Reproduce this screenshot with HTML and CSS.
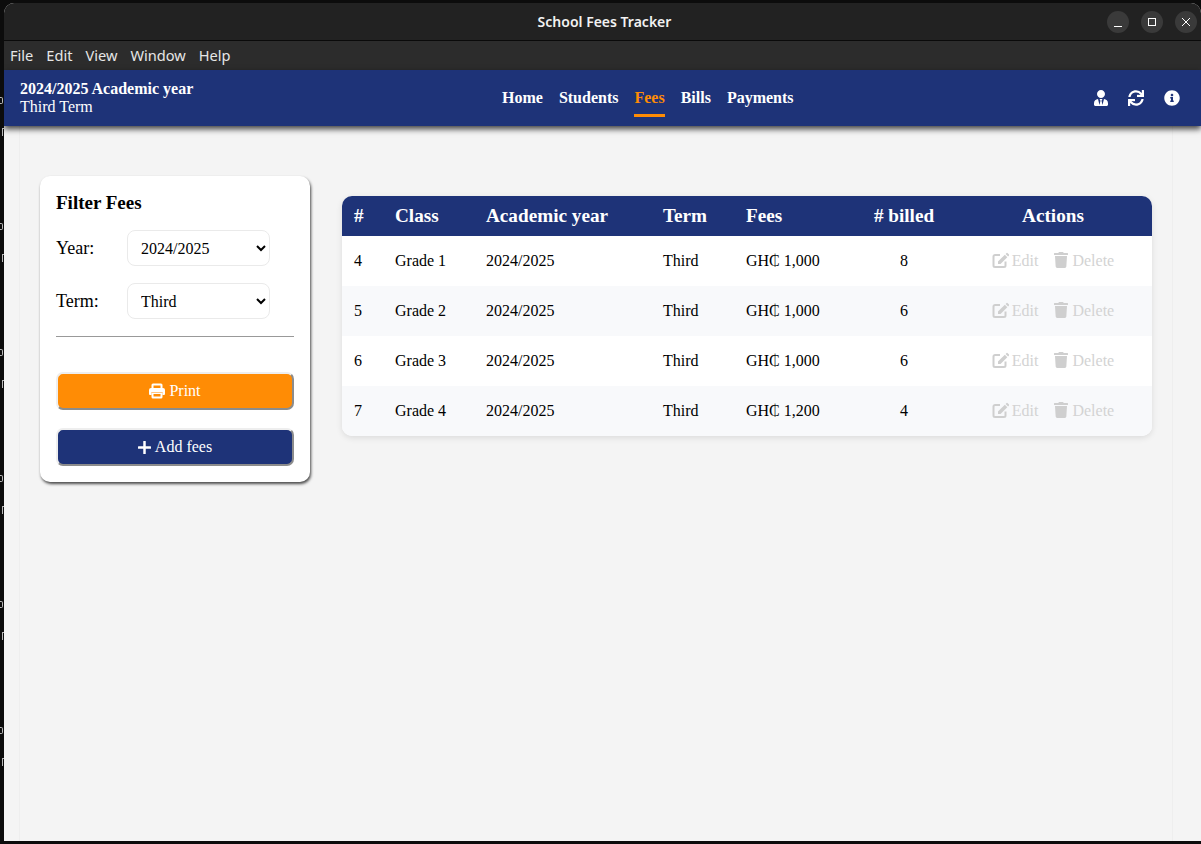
FILE: index.html

```html
<!DOCTYPE html>
<html lang="en">
<head>
    <meta charset="UTF-8">
    <title>School Fees Tracker</title>
    <link rel="stylesheet" href="styles.css">
</head>
<body>
<svg class="defs" width="0" height="0">
    <symbol id="i-print" viewBox="0 0 16 16"><path d="M4 0.5h8a1.5 1.5 0 0 1 1.5 1.5v3.5h-2V2.5h-7v3h-2V2A1.5 1.5 0 0 1 4 0.5z"/><path d="M2 5h12a2 2 0 0 1 2 2v4a1 1 0 0 1-1 1h-1.500V9h-11v3H1a1 1 0 0 1-1-1V7a2 2 0 0 1 2-2z"/><path fill-rule="evenodd" d="M2.500 9.500h11V14a1.500 1.500 0 0 1-1.500 1.500H4A1.500 1.500 0 0 1 2.500 14zM4.500 11v2.500h7V11z"/></symbol>
    <symbol id="i-plus" viewBox="0 0 13 13"><rect x="5.250" y="0" width="2.500" height="13" rx="0.500"/><rect x="0" y="5.250" width="13" height="2.500" rx="0.500"/></symbol>
    <symbol id="i-edit" viewBox="0 0 17 16"><path d="M8 3H3a1.500 1.500 0 0 0-1.500 1.500v9A1.500 1.500 0 0 0 3 15h9a1.500 1.500 0 0 0 1.500-1.500V9.500" fill="none" stroke-width="2" stroke="#cfcfcf"/><path d="M6 9.500L12.800 2.700l2.500 2.500L8.500 12H6z"/><path d="M13.600 1.900l.7-.7a1 1 0 0 1 1.400 0l1.100 1.100a1 1 0 0 1 0 1.400l-.7.700z"/></symbol>
    <symbol id="i-trash" viewBox="0 0 448 512"><path d="M432 32H312l-9.4-18.7A24 24 0 0 0 281.1 0H166.8a23.72 23.72 0 0 0-21.4 13.3L136 32H16A16 16 0 0 0 0 48v32a16 16 0 0 0 16 16h416a16 16 0 0 0 16-16V48a16 16 0 0 0-16-16zM53.2 467a48 48 0 0 0 47.9 45h245.8a48 48 0 0 0 47.9-45L416 128H32z"/></symbol>
    <symbol id="i-user" viewBox="0 0 448 512"><path d="M224 256c70.7 0 128-57.3 128-128S294.7 0 224 0 96 57.3 96 128s57.3 128 128 128zm95.8 32.6L272 480l-32-136 32-56h-96l32 56-32 136-47.8-191.4C56.9 292 0 350.3 0 422.4V464c0 26.5 21.5 48 48 48h352c26.5 0 48-21.5 48-48v-41.6c0-72.1-56.9-130.4-128.2-133.8z"/></symbol>
    <symbol id="i-sync" viewBox="0 0 512 512"><path d="M440.65 12.57l4 82.77A247.16 247.16 0 0 0 255.83 8C134.73 8 33.91 94.92 12.29 209.82A12 12 0 0 0 24.09 224h49.05a12 12 0 0 0 11.67-9.26 175.91 175.91 0 0 1 317-56.94l-101.46-4.86a12 12 0 0 0-12.57 12v47.41a12 12 0 0 0 12 12H500a12 12 0 0 0 12-12V12a12 12 0 0 0-12-12h-47.37a12 12 0 0 0-11.98 12.57zM255.83 432a175.61 175.61 0 0 1-146-77.8l101.8 4.87a12 12 0 0 0 12.57-12v-47.4a12 12 0 0 0-12-12H12a12 12 0 0 0-12 12V500a12 12 0 0 0 12 12h47.35a12 12 0 0 0 12-12.6l-4.15-82.57A247.17 247.17 0 0 0 255.83 504c121.11 0 221.93-86.92 243.55-201.82a12 12 0 0 0-11.8-14.18h-49.05a12 12 0 0 0-11.67 9.26A175.86 175.86 0 0 1 255.83 432z"/></symbol>
    <symbol id="i-info" viewBox="0 0 512 512"><path d="M256 8C119.043 8 8 119.083 8 256c0 136.997 111.043 248 248 248s248-111.003 248-248C504 119.083 392.957 8 256 8zm0 110c23.196 0 42 18.804 42 42s-18.804 42-42 42-42-18.804-42-42 18.804-42 42-42zm56 254c0 6.627-5.373 12-12 12h-88c-6.627 0-12-5.373-12-12v-24c0-6.627 5.373-12 12-12h12v-64h-12c-6.627 0-12-5.373-12-12v-24c0-6.627 5.373-12 12-12h64c6.627 0 12 5.373 12 12v100h12c6.627 0 12 5.373 12 12v24z"/></symbol>
</svg>

<!-- bits of the desktop behind the window -->
<div class="desktop-bits">
    <div class="bits-row"><i class="bit-o"></i><i class="bit-r"></i></div>
    <div class="bits-row"><i class="bit-o"></i><i class="bit-r"></i></div>
    <div class="bits-row"><i class="bit-o"></i><i class="bit-r"></i></div>
    <div class="bits-row"><i class="bit-o"></i><i class="bit-r"></i></div>
    <div class="bits-row"><i class="bit-o"></i><i class="bit-r"></i></div>
    <div class="bits-row"><i class="bit-o"></i><i class="bit-r"></i></div>
</div>

<div class="window">
    <div class="titlebar">
        <span class="title">School Fees Tracker</span>
        <div class="win-btns">
            <span class="win-btn"><svg width="10" height="10" viewBox="0 0 10 10"><path d="M1 9.500h8" stroke="#fff" stroke-width="1"/></svg></span>
            <span class="win-btn"><svg width="10" height="10" viewBox="0 0 10 10"><rect x="1.500" y="1.500" width="7" height="7" fill="none" stroke="#fff" stroke-width="1"/></svg></span>
            <span class="win-btn"><svg width="10" height="10" viewBox="0 0 10 10"><path d="M1 1l8 8M9 1l-8 8" stroke="#fff" stroke-width="1"/></svg></span>
        </div>
    </div>
    <div class="menubar">
        <span>File</span><span>Edit</span><span>View</span><span>Window</span><span>Help</span>
    </div>
    <header class="header">
        <div class="session">
            <strong>2024/2025 Academic year</strong>
            <span>Third Term</span>
        </div>
        <nav class="nav">
            <a>Home</a>
            <a>Students</a>
            <a class="active">Fees</a>
            <a>Bills</a>
            <a>Payments</a>
        </nav>
        <div class="tools">
            <svg class="tool tool-user"><use href="#i-user"/></svg>
            <svg class="tool"><use href="#i-sync"/></svg>
            <svg class="tool"><use href="#i-info"/></svg>
        </div>
    </header>
    <main class="page">
        <div class="panel">
            <aside class="filter">
                <h2>Filter Fees</h2>
                <div class="field">
                    <label>Year:</label>
                    <select><option>2024/2025</option></select>
                </div>
                <div class="field">
                    <label>Term:</label>
                    <select><option>Third</option></select>
                </div>
                <hr>
                <button class="btn btn-print"><svg class="btn-icon"><use href="#i-print"/></svg> Print</button>
                <button class="btn btn-add"><svg class="btn-plus"><use href="#i-plus"/></svg> Add fees</button>
            </aside>
            <section class="fees">
                <table>
                    <colgroup>
                        <col class="c-id"><col class="c-class"><col class="c-year"><col class="c-term"><col class="c-fees"><col class="c-billed"><col class="c-actions">
                    </colgroup>
                    <thead>
                        <tr><th>#</th><th>Class</th><th>Academic year</th><th>Term</th><th>Fees</th><th class="mid"># billed</th><th class="mid">Actions</th></tr>
                    </thead>
                    <tbody>
                        <tr>
                            <td>4</td><td>Grade 1</td><td>2024/2025</td><td>Third</td><td>GH₵ 1,000</td><td class="mid">8</td>
                            <td class="mid"><span class="act"><svg class="a-edit"><use href="#i-edit"/></svg> Edit</span><span class="act"><svg class="a-trash"><use href="#i-trash"/></svg> Delete</span></td>
                        </tr>
                        <tr>
                            <td>5</td><td>Grade 2</td><td>2024/2025</td><td>Third</td><td>GH₵ 1,000</td><td class="mid">6</td>
                            <td class="mid"><span class="act"><svg class="a-edit"><use href="#i-edit"/></svg> Edit</span><span class="act"><svg class="a-trash"><use href="#i-trash"/></svg> Delete</span></td>
                        </tr>
                        <tr>
                            <td>6</td><td>Grade 3</td><td>2024/2025</td><td>Third</td><td>GH₵ 1,000</td><td class="mid">6</td>
                            <td class="mid"><span class="act"><svg class="a-edit"><use href="#i-edit"/></svg> Edit</span><span class="act"><svg class="a-trash"><use href="#i-trash"/></svg> Delete</span></td>
                        </tr>
                        <tr>
                            <td>7</td><td>Grade 4</td><td>2024/2025</td><td>Third</td><td>GH₵ 1,200</td><td class="mid">4</td>
                            <td class="mid"><span class="act"><svg class="a-edit"><use href="#i-edit"/></svg> Edit</span><span class="act"><svg class="a-trash"><use href="#i-trash"/></svg> Delete</span></td>
                        </tr>
                    </tbody>
                </table>
            </section>
        </div>
    </main>
</div>
</body>
</html>
```

FILE: styles.css

```css
* {
    box-sizing: border-box;
}

html, body {
    margin: 0;
    height: 100%;
}

body {
    background: #0c0c0c;
    padding: 3px 0 3px 4px;
    font-family: "Liberation Serif", serif;
    overflow: hidden;
}

.defs {
    position: absolute;
}

.desktop-bits {
    position: absolute;
    left: 0;
    top: 97px;
    width: 4px;
    overflow: hidden;
}

.bits-row {
    height: 126px;
}

.bit-o {
    display: block;
    width: 3px;
    height: 7px;
    border: 1px solid #b8b8b8;
    border-left: 0;
    border-radius: 0 2px 2px 0;
}

.bit-r {
    display: block;
    width: 2px;
    height: 8px;
    margin: 24px 0 0 2px;
    border-left: 1px solid #b8b8b8;
    border-top: 1px solid #b8b8b8;
}

.window {
    height: 100%;
    display: flex;
    flex-direction: column;
    background: #f4f4f4;
    border-top-left-radius: 10px;
    border-top-right-radius: 10px;
    overflow: hidden;
    position: relative;
}

.titlebar {
    height: 38px;
    flex: none;
    background: #222;
    border-bottom: 1px solid #0a0a0a;
    display: flex;
    align-items: center;
    justify-content: center;
    padding-left: 4px;
    position: relative;
}

.title {
    font-family: "Noto Sans", sans-serif;
    font-size: 14px;
    font-weight: 600;
    color: #f2f2f2;
}

.win-btns {
    position: absolute;
    right: 4px;
    top: 8px;
    display: flex;
    gap: 12px;
}

.win-btn {
    width: 22px;
    height: 22px;
    border-radius: 50%;
    background: #3a3a3a;
    display: flex;
    align-items: center;
    justify-content: center;
}

.menubar {
    height: 29px;
    flex: none;
    background: #2c2c2c;
    display: flex;
    align-items: center;
    gap: 13px;
    padding: 0 0 2px 6px;
    font-family: "Noto Sans", sans-serif;
    font-size: 14.6px;
    color: #e6e6e6;
}

.header {
    height: 56px;
    flex: none;
    background: #1e3378;
    box-shadow: 0 3px 6px rgba(0, 0, 0, 0.75);
    display: flex;
    align-items: center;
    padding: 0 21px 0 16px;
    color: #fff;
    position: relative;
}

.session {
    width: 330px;
    display: flex;
    flex-direction: column;
    font-size: 16px;
    line-height: 18px;
}

.nav {
    display: flex;
    gap: 16px;
    margin-left: 152px;
    font-size: 16px;
    font-weight: bold;
}

.nav a {
    padding: 5px 0 7px;
    border-bottom: 3px solid transparent;
    margin-top: 4px;
}

.nav a.active {
    color: #ff8c05;
    border-bottom-color: #ff8c05;
}

.tools {
    margin-left: auto;
    display: flex;
    gap: 20px;
}

.tool {
    width: 16px;
    height: 16px;
    fill: #fff;
}

.tool-user {
    margin-right: -1px;
}

.page {
    flex: 1;
    padding: 0 28px 0 15px;
}

.panel {
    height: 100%;
    border-left: 1px solid #eee;
    border-right: 1px solid #eee;
    padding: 50px 20px 0 20px;
    display: flex;
    align-items: flex-start;
    gap: 32px;
}

.filter {
    width: 270px;
    flex: none;
    height: 306px;
    background: #fff;
    border-radius: 10px;
    box-shadow: 1px 2px 3px rgba(0, 0, 0, 0.7);
    padding: 16px;
}

.filter h2 {
    margin: 0 0 16px;
    font-size: 19px;
    line-height: 22px;
}

.field {
    display: flex;
    align-items: center;
    margin-bottom: 17px;
    font-size: 18px;
}

.field label {
    width: 71px;
}

.field select {
    width: 143px;
    height: 36px;
    padding: 0 9px;
    font-family: "Liberation Serif", serif;
    font-size: 16px;
    background: #fff;
    border: 1px solid #eaeaea;
    border-radius: 8px;
}

.filter hr {
    border: 0;
    border-top: 1px solid #999;
    margin: 0 0 35px;
}

.btn {
    display: flex;
    align-items: center;
    justify-content: center;
    gap: 4px;
    width: 100%;
    height: 38px;
    margin-bottom: 18px;
    font-family: "Liberation Serif", serif;
    font-size: 16px;
    color: #fff;
    border: 2px solid;
    border-color: #eee #8c8c8c #8c8c8c #eee;
    border-radius: 7px;
}

.btn-print {
    background: #ff8c05;
}

.btn-add {
    background: #1e3378;
}

.btn-icon {
    width: 16px;
    height: 16px;
    fill: #fff;
}

.btn-plus {
    width: 13px;
    height: 13px;
    fill: #fff;
}

.fees {
    flex: 1;
    padding-top: 20px;
}

table {
    width: 810px;
    table-layout: fixed;
    border-collapse: separate;
    border-spacing: 0;
    background: #fff;
    border-radius: 10px;
    box-shadow: 0 2px 6px rgba(0, 0, 0, 0.1);
    overflow: hidden;
}

.c-id { width: 41px; }
.c-class { width: 91px; }
.c-year { width: 177px; }
.c-term { width: 83px; }
.c-fees { width: 120px; }
.c-billed { width: 100px; }
.c-actions { width: 198px; }

th {
    height: 40px;
    padding: 0 12px;
    background: #1e3378;
    color: #fff;
    font-size: 19.2px;
    text-align: left;
}

td {
    height: 50px;
    padding: 0 12px;
    font-size: 16px;
    color: #000;
}

tbody tr:nth-child(even) td {
    background: #f8f9fb;
}

th.mid, td.mid {
    text-align: center;
}

.act {
    color: #d3d3d3;
    margin: 0 8px;
}

.act svg {
    height: 16px;
    fill: #cfcfcf;
    vertical-align: -2px;
}

.act .a-edit {
    width: 17px;
    margin-right: -1px;
}

.act .a-trash {
    width: 14px;
}
```
